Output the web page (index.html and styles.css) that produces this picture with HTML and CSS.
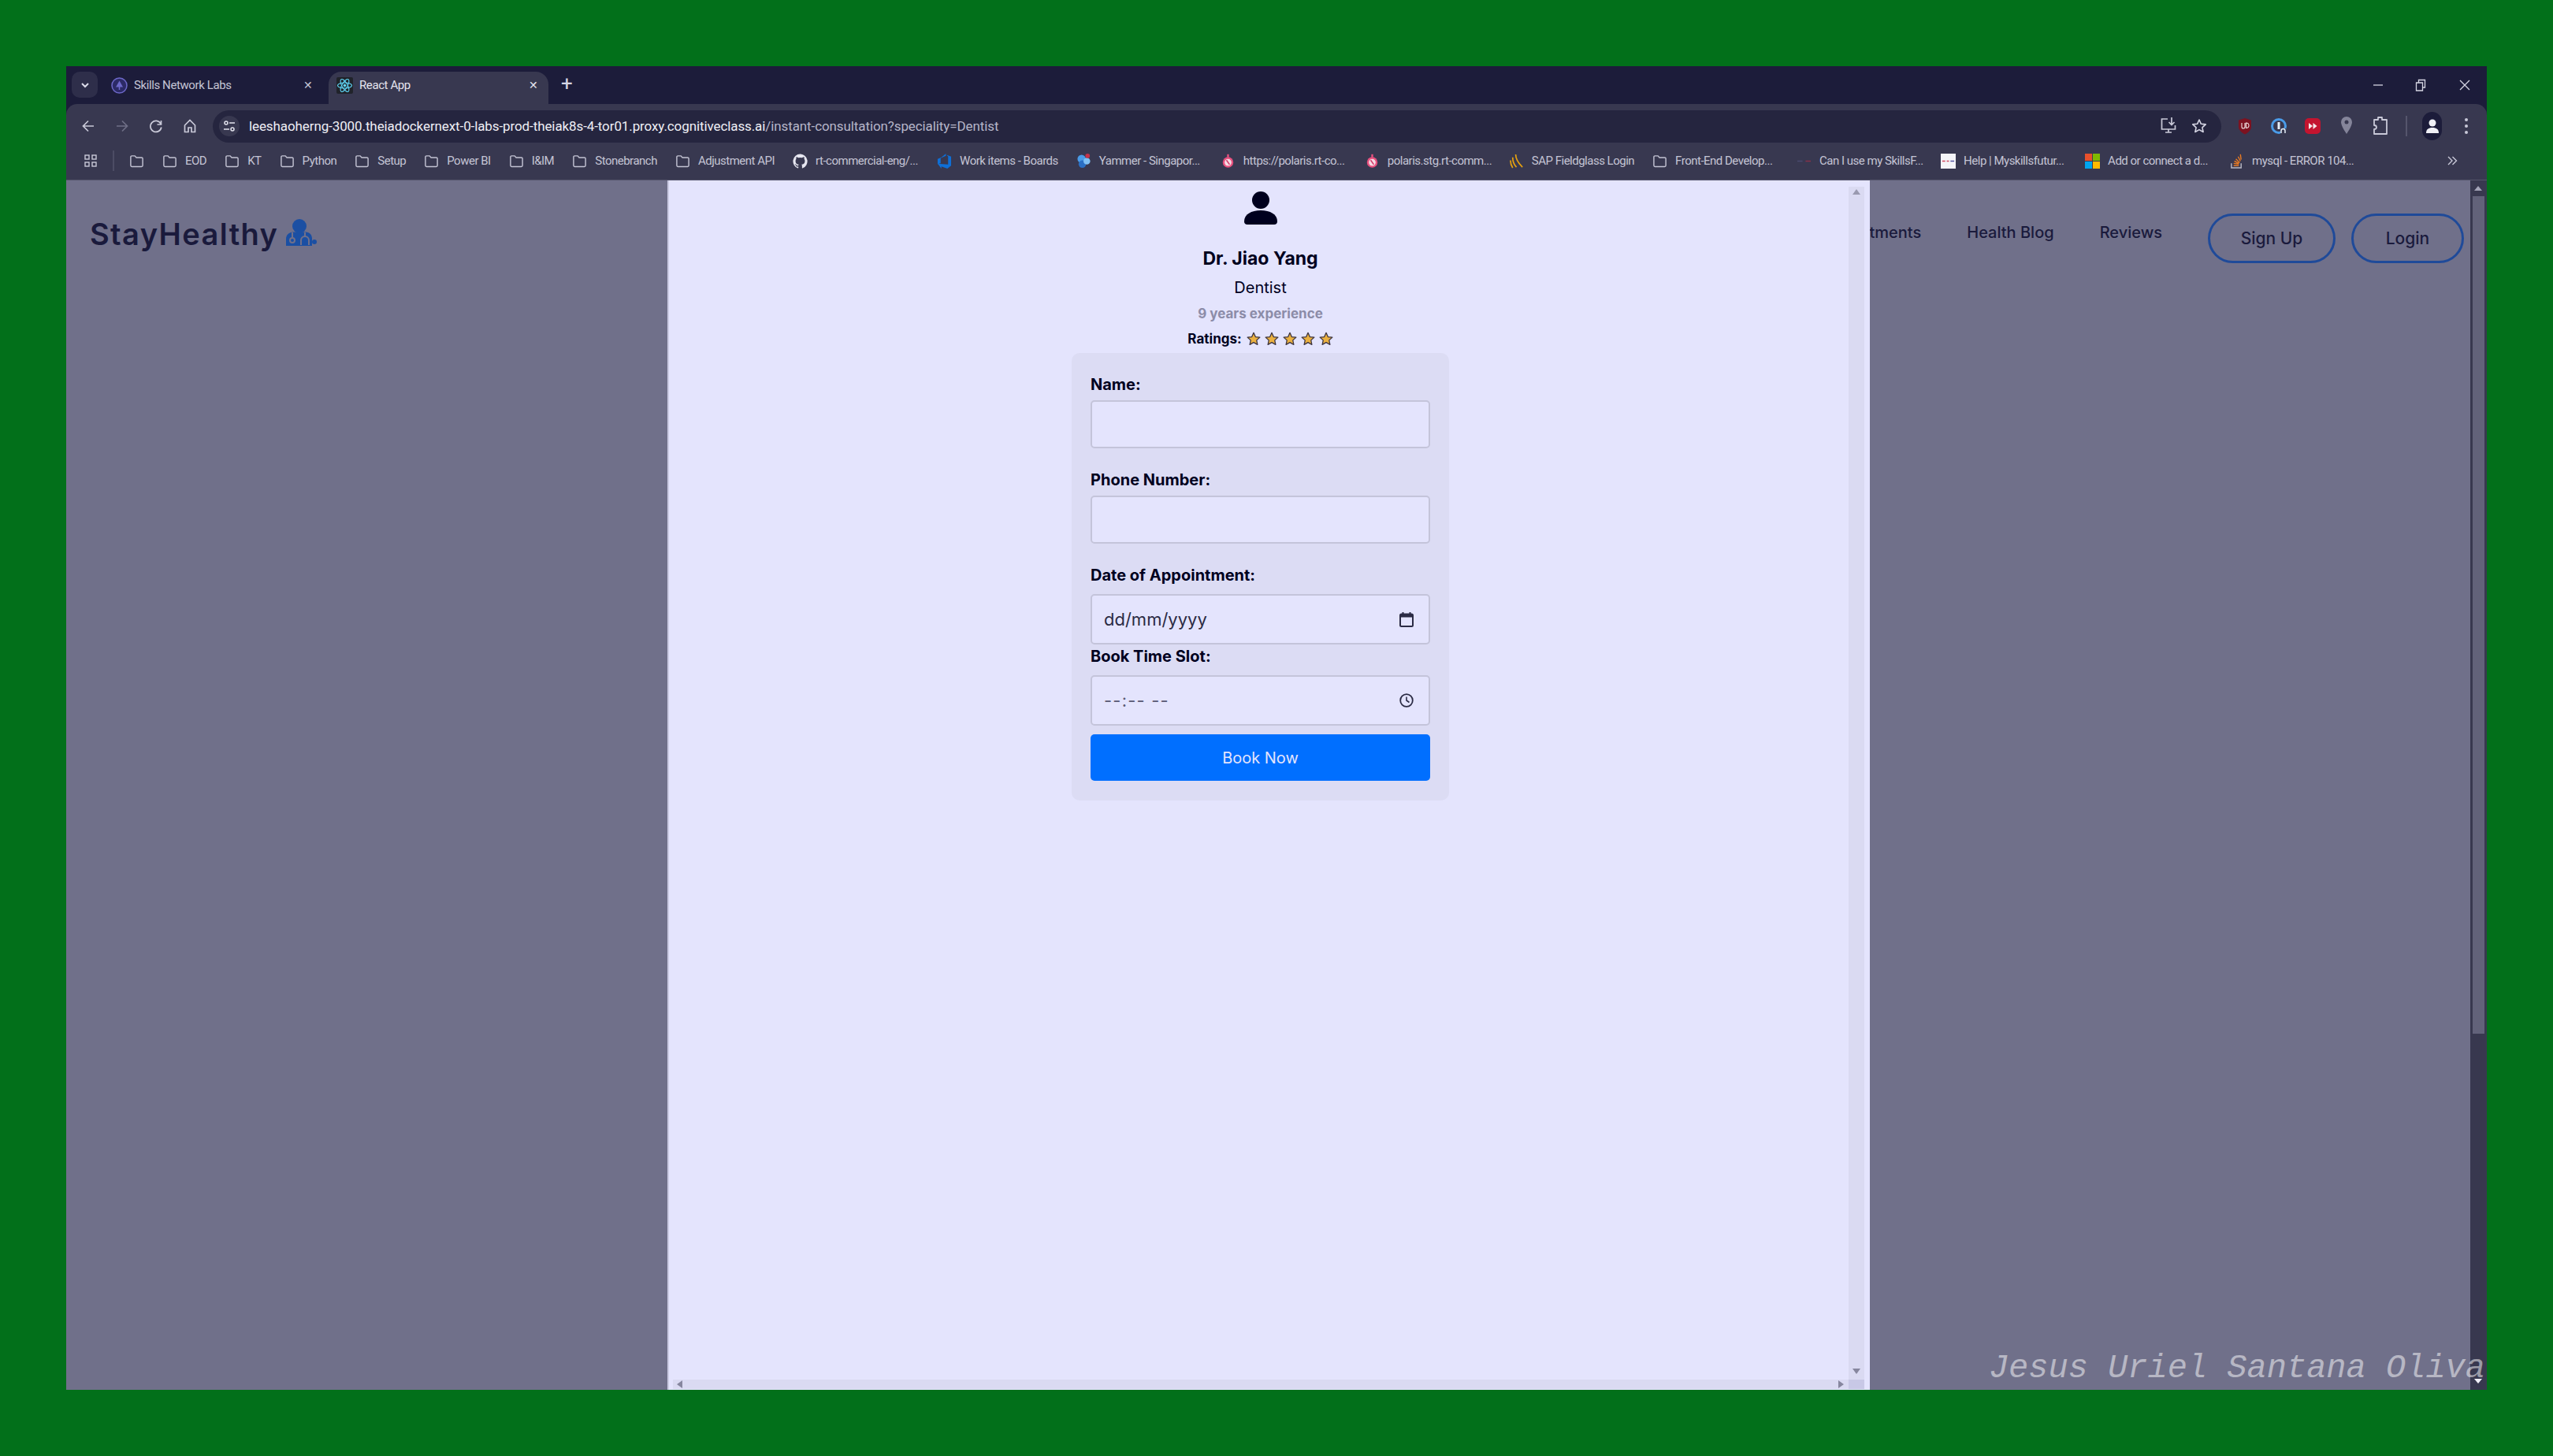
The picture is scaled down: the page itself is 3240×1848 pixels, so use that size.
FILE: index.html

```html
<!DOCTYPE html>
<html lang="en">
<head>
  <meta charset="UTF-8" />
  <title>React App</title>
  <link rel="stylesheet" href="styles.css">
</head>
<body>
  <svg class="defs" width="0" height="0">
    <symbol id="folder" viewBox="0 0 20 20">
      <path d="M2 4.500c0-.8.6-1.500 1.500-1.500h4l2 2.200h7c.8 0 1.500.6 1.500 1.500v9.100c0 .8-.7 1.500-1.500 1.500h-13c-.9 0-1.500-.7-1.500-1.500z" fill="none" stroke="currentColor" stroke-width="1.500"/>
    </symbol>
    <symbol id="star" viewBox="0 0 24 24">
      <path d="M12 1.800l3.100 6.900 7.400.8-5.500 5 1.500 7.400-6.500-3.800-6.500 3.800 1.500-7.400-5.500-5 7.400-.8z" fill="#eab040" stroke="#3b3340" stroke-width="1.700" stroke-linejoin="round"/>
    </symbol>
    <symbol id="polaris" viewBox="0 0 20 24">
      <circle cx="10" cy="14" r="8.500" fill="#e8517f"/>
      <circle cx="10" cy="14" r="5.500" fill="#f6dbe4"/>
      <rect x="8.500" y="1" width="3" height="5" fill="#e8517f"/>
      <path d="M7.500 10.500l5 7" stroke="#d13a68" stroke-width="2"/>
    </symbol>
  </svg>

  <div class="window">
    <div class="tabstrip">
      <button class="tab-list">
        <svg width="14" height="14" viewBox="0 0 14 14"><path d="M3 5l4 4 4-4" fill="none" stroke="#dcdcea" stroke-width="2"/></svg>
      </button>
      <div class="tab">
        <svg class="tab-icon" width="21" height="21" viewBox="0 0 21 21"><circle cx="10.500" cy="10.500" r="9.500" fill="#2c2a66" stroke="#6d68c8" stroke-width="1.500"/><path d="M10.500 4.500l4.500 8h-9z" fill="#6d68c8"/><path d="M10.500 10v6" stroke="#6d68c8" stroke-width="1.500"/></svg>
        <span class="tab-title">Skills Network Labs</span>
        <span class="tab-close">✕</span>
      </div>
      <div class="tab tab-active">
        <svg class="tab-icon" width="21" height="21" viewBox="0 0 21 21"><rect width="21" height="21" rx="2" fill="#20232a"/><g fill="none" stroke="#61dafb" stroke-width="1.100"><ellipse cx="10.500" cy="10.500" rx="9" ry="3.500"/><ellipse cx="10.500" cy="10.500" rx="9" ry="3.500" transform="rotate(60 10.500 10.500)"/><ellipse cx="10.500" cy="10.500" rx="9" ry="3.500" transform="rotate(120 10.500 10.500)"/></g><circle cx="10.500" cy="10.500" r="1.800" fill="#61dafb"/></svg>
        <span class="tab-title">React App</span>
        <span class="tab-close">✕</span>
      </div>
      <span class="tab-new">+</span>
      <div class="win-controls">
        <svg class="win-min" width="14" height="14" viewBox="0 0 14 14"><path d="M1 7h12" stroke="#d6d6e4" stroke-width="1.300"/></svg>
        <svg class="win-restore" width="14" height="16" viewBox="0 0 14 16"><path d="M1.500 5h8v10h-8zM4.500 5V1.500h8V11H9.500" fill="none" stroke="#d6d6e4" stroke-width="1.300"/></svg>
        <svg class="win-close" width="14" height="14" viewBox="0 0 14 14"><path d="M1 1l12 12M13 1L1 13" stroke="#d6d6e4" stroke-width="1.300"/></svg>
      </div>
    </div>

    <div class="toolbar">
      <span class="tool-btn"><svg width="20" height="20" viewBox="0 0 20 20"><path d="M17 10H4M10 3.500L3.500 10l6.500 6.500" fill="none" stroke="#c9c9d8" stroke-width="1.700"/></svg></span>
      <span class="tool-btn"><svg width="20" height="20" viewBox="0 0 20 20"><path d="M3 10h13M10 3.500l6.500 6.500-6.500 6.500" fill="none" stroke="#6f6f86" stroke-width="1.700"/></svg></span>
      <span class="tool-btn"><svg width="20" height="20" viewBox="0 0 20 20"><path d="M16 7a7 7 0 1 0 .8 4.500M16.500 3v5h-5" fill="none" stroke="#c9c9d8" stroke-width="1.700"/></svg></span>
      <span class="tool-btn"><svg width="20" height="20" viewBox="0 0 20 20"><path d="M3.500 9L10 2.500 16.500 9v8.500h-4.500v-5.500h-4v5.500H3.500z" fill="none" stroke="#c9c9d8" stroke-width="1.700"/></svg></span>
      <div class="omnibox">
        <span class="site-info"><svg width="16" height="16" viewBox="0 0 16 16"><g fill="none" stroke="#e4e4ee" stroke-width="1.500"><circle cx="4" cy="4" r="2"/><path d="M8 4h7M1 12h7"/><circle cx="12" cy="12" r="2"/></g></svg></span>
        <span class="url"><span class="url-host">leeshaoherng-3000.theiadockernext-0-labs-prod-theiak8s-4-tor01.proxy.cognitiveclass.ai</span>/instant-consultation?speciality=Dentist</span>
        <svg class="omni-icon" width="22" height="24" viewBox="0 0 22 24"><path d="M10 3H2.500v13h17v-5M7 20h8M11 16v4" fill="none" stroke="#c9c9d8" stroke-width="1.700"/><path d="M15 1v9M11.500 7l3.500 3.500L18.500 7" fill="none" stroke="#c9c9d8" stroke-width="1.700"/></svg>
        <svg class="omni-icon" width="20" height="20" viewBox="0 0 20 20"><path d="M10 2l2.400 5.300 5.800.6-4.300 3.900 1.200 5.700-5.100-2.900-5.100 2.900 1.200-5.700-4.300-3.900 5.800-.6z" fill="none" stroke="#d6d6e4" stroke-width="1.600" stroke-linejoin="round"/></svg>
      </div>
      <span class="tool-btn"><svg width="18" height="22" viewBox="0 0 18 22"><path d="M9 1l8 2.500V12c0 4-4 7.500-8 9.500C5 19.500 1 16 1 12V3.500z" fill="#7d1220"/><path d="M5 7v5a2 2 0 0 0 4 0V7M10.500 7v6.500c2.800 0 3.500-1.500 3.500-3.200s-.7-3.300-3.500-3.300z" fill="none" stroke="#f0e0e0" stroke-width="1.100"/></svg></span>
      <span class="tool-btn"><svg width="20" height="24" viewBox="0 0 20 24"><circle cx="10" cy="12" r="8.500" fill="none" stroke="#4a9be8" stroke-width="3"/><rect x="8.500" y="7" width="3" height="9" fill="#e6eef8"/><rect x="12" y="15" width="7" height="7" fill="#383850"/><path d="M13 21v-3a2.500 2.500 0 0 1 5 0v3" fill="none" stroke="#e6eef8" stroke-width="1.500"/></svg></span>
      <span class="tool-btn"><svg width="20" height="20" viewBox="0 0 20 20"><rect width="20" height="20" y="0" rx="5" fill="#c4142f"/><path d="M5 6l5 4-5 4zM10.500 6l5 4-5 4z" fill="#f6e6e8"/></svg></span>
      <span class="tool-btn"><svg width="18" height="26" viewBox="0 0 18 26"><path d="M9 1a7 7 0 0 0-7 7c0 5 7 15 7 15s7-10 7-15a7 7 0 0 0-7-7z" fill="#85859a"/><circle cx="9" cy="8" r="2.500" fill="#383850"/></svg></span>
      <span class="tool-btn"><svg width="20" height="26" viewBox="0 0 20 26"><path d="M2 5h5V2h5v3h6v18H2v-6c2.500 0 3-1.500 3-2.500S4.500 12 2 12z" fill="none" stroke="#c9c9d8" stroke-width="1.800" stroke-linejoin="round"/></svg></span>
      <span class="tool-sep"></span>
      <span class="tool-btn"><span class="profile"><svg width="18" height="20" viewBox="0 0 18 20"><circle cx="9" cy="6" r="4.500" fill="#f0f0f6"/><path d="M1 19c0-5 3-7 8-7s8 2 8 7z" fill="#f0f0f6"/></svg></span></span>
      <span class="tool-btn"><svg width="6" height="22" viewBox="0 0 6 22"><g fill="#c9c9d8"><circle cx="3" cy="3" r="2"/><circle cx="3" cy="11" r="2"/><circle cx="3" cy="19" r="2"/></g></svg></span>
    </div>

    <div class="bookmarks">
      <svg class="bm-apps" width="16" height="16" viewBox="0 0 16 16"><g fill="none" stroke="#c9c9d8" stroke-width="1.400"><rect x="1" y="1" width="5" height="5"/><rect x="10" y="1" width="5" height="5"/><rect x="1" y="10" width="5" height="5"/><rect x="10" y="10" width="5" height="5"/></g></svg>
      <span class="bm-sep"></span>
      <span class="bm"><svg class="bm-icon"><use href="#folder"/></svg></span>
      <span class="bm"><svg class="bm-icon"><use href="#folder"/></svg>EOD</span>
      <span class="bm"><svg class="bm-icon"><use href="#folder"/></svg>KT</span>
      <span class="bm"><svg class="bm-icon"><use href="#folder"/></svg>Python</span>
      <span class="bm"><svg class="bm-icon"><use href="#folder"/></svg>Setup</span>
      <span class="bm"><svg class="bm-icon"><use href="#folder"/></svg>Power BI</span>
      <span class="bm"><svg class="bm-icon"><use href="#folder"/></svg>I&amp;IM</span>
      <span class="bm"><svg class="bm-icon"><use href="#folder"/></svg>Stonebranch</span>
      <span class="bm"><svg class="bm-icon"><use href="#folder"/></svg>Adjustment API</span>
      <span class="bm"><svg class="bm-icon" viewBox="0 0 20 20"><path d="M10 .5a9.800 9.800 0 0 0-3.100 19c.5.100.7-.2.700-.5v-1.700c-2.700.6-3.300-1.300-3.300-1.300-.5-1.100-1.100-1.400-1.100-1.400-.9-.6.100-.6.100-.6 1 .1 1.500 1 1.500 1 .9 1.500 2.300 1.100 2.800.8.100-.6.300-1.100.6-1.300-2.200-.3-4.400-1.100-4.400-4.800 0-1.100.4-1.900 1-2.600-.1-.2-.4-1.200.1-2.600 0 0 .8-.3 2.700 1a9.300 9.300 0 0 1 4.900 0c1.900-1.300 2.700-1 2.700-1 .5 1.400.2 2.400.1 2.600.6.700 1 1.500 1 2.600 0 3.800-2.300 4.600-4.500 4.800.4.300.7.900.7 1.900V19c0 .3.200.6.700.5A9.800 9.800 0 0 0 10 .5z" fill="#e6e6f0"/></svg><span class="bm-cut">rt-commercial-eng/...</span></span>
      <span class="bm"><svg class="bm-icon" viewBox="0 0 20 20"><path d="M19 4v12l-5 4-8-3v3l-5-6.500 14 1V4l-2-2.500zM6 5l6-5v3L5 6v7l-4 1V7z" fill="#0f6fd6"/></svg>Work items - Boards</span>
      <span class="bm"><svg class="bm-icon" viewBox="0 0 20 20"><circle cx="7" cy="7" r="5.500" fill="#4a9be8"/><circle cx="8" cy="14" r="5" fill="#2a6fc4"/><circle cx="14" cy="10" r="4.500" fill="#7fc0f4"/><circle cx="15" cy="3" r="3" fill="#c4324a"/></svg><span class="bm-cut">Yammer - Singapor...</span></span>
      <span class="bm"><svg class="bm-icon"><use href="#polaris"/></svg><span class="bm-cut">https://polaris.rt-co...</span></span>
      <span class="bm"><svg class="bm-icon"><use href="#polaris"/></svg><span class="bm-cut">polaris.stg.rt-comm...</span></span>
      <span class="bm"><svg class="bm-icon" viewBox="0 0 20 20"><path d="M9 1c0 6 4 12 9 17M5 5c0 5 2 10 5 13M2 9c0 4 1 7 3 10" fill="none" stroke="#e6a10f" stroke-width="1.800"/></svg>SAP Fieldglass Login</span>
      <span class="bm"><svg class="bm-icon"><use href="#folder"/></svg><span class="bm-cut">Front-End Develop...</span></span>
      <span class="bm"><svg class="bm-icon" viewBox="0 0 20 20"><path d="M1 10h7" stroke="#4a4a70" stroke-width="1.500"/><path d="M12 10h7" stroke="#8a3048" stroke-width="1.500"/></svg><span class="bm-cut">Can I use my SkillsF...</span></span>
      <span class="bm"><svg class="bm-icon" viewBox="0 0 20 20"><rect width="20" height="20" fill="#f4f4f8"/><path d="M2 10h4M8 10h3" stroke="#d04a60" stroke-width="1.500"/><path d="M13 10h5" stroke="#5050a0" stroke-width="1.500"/></svg><span class="bm-cut">Help | Myskillsfutur...</span></span>
      <span class="bm"><svg class="bm-icon" viewBox="0 0 20 20"><rect width="9.500" height="9.500" fill="#e8502c"/><rect x="10.500" width="9.500" height="9.500" fill="#7fb800"/><rect y="10.500" width="9.500" height="9.500" fill="#00a4ef"/><rect x="10.500" y="10.500" width="9.500" height="9.500" fill="#ffb900"/></svg><span class="bm-cut">Add or connect a d...</span></span>
      <span class="bm"><svg class="bm-icon" viewBox="0 0 20 20"><path d="M3 13v6h13v-6" fill="none" stroke="#b8b8c4" stroke-width="1.500"/><path d="M6 16h7M6 13l7 1M7 10l6 3M9 7l5 5M12 4l3 6M15 1l1 7" stroke="#e87a23" stroke-width="1.500"/></svg><span class="bm-cut">mysql - ERROR 104...</span></span>
      <svg class="bm-more" width="14" height="14" viewBox="0 0 14 14"><path d="M2 2l5 5-5 5M7.500 2l5 5-5 5" fill="none" stroke="#c9c9d8" stroke-width="1.400"/></svg>
    </div>

    <div class="viewport">
      <div class="page">
        <header class="site-nav">
          <div class="logo">
            <span>StayHealthy</span>
            <svg width="39" height="34" viewBox="0 0 39 34"><circle cx="17" cy="9" r="9" fill="#1b4fa3"/><path d="M0 34v-9c0-5 4-8 9-8.500h16c5 .5 8 3.500 8 8.500v9z" fill="#1b4fa3"/><g fill="none" stroke="#70708a" stroke-width="2"><circle cx="8" cy="27" r="3"/><path d="M8 24v-7M19 33v-6a5 5 0 0 1 10 0v6M24 22v-5"/></g><circle cx="36" cy="29" r="3" fill="#1b4fa3"/></svg>
          </div>
          <div class="nav-right">
            <nav class="nav-links">
              <a>Appointments</a>
              <a>Health Blog</a>
              <a>Reviews</a>
            </nav>
            <a class="nav-btn btn-signup">Sign Up</a>
            <a class="nav-btn btn-login">Login</a>
          </div>
        </header>

        <div class="modal">
          <div class="modal-body">
            <svg class="avatar" width="42" height="42" viewBox="0 0 42 42"><circle cx="21" cy="11" r="11" fill="#00001e"/><path d="M0 38c0-9 9-14 21-14s21 5 21 14c0 2.500-1.500 4-4 4H4c-2.500 0-4-1.500-4-4z" fill="#00001e"/></svg>
            <div class="doc-name">Dr. Jiao Yang</div>
            <div class="doc-spec">Dentist</div>
            <div class="doc-exp">9 years experience</div>
            <div class="doc-rating">
              <span>Ratings:</span>
              <span class="stars">
                <svg class="star"><use href="#star"/></svg>
                <svg class="star"><use href="#star"/></svg>
                <svg class="star"><use href="#star"/></svg>
                <svg class="star"><use href="#star"/></svg>
                <svg class="star"><use href="#star"/></svg>
              </span>
            </div>

            <form class="book-card">
              <label class="lbl">Name:</label>
              <input class="inp" type="text">
              <label class="lbl lbl-next">Phone Number:</label>
              <input class="inp" type="text">
              <label class="lbl lbl-next lbl-date">Date of Appointment:</label>
              <div class="inp inp-picker">
                <span>dd/mm/yyyy</span>
                <svg width="18" height="19" viewBox="0 0 18 19"><path d="M4.500 0v3M13.500 0v3" stroke="#2b2b44" stroke-width="2"/><rect x="1" y="2.500" width="16" height="15.500" rx="1.500" fill="none" stroke="#2b2b44" stroke-width="2"/><rect x="1" y="2.500" width="16" height="4" fill="#2b2b44"/></svg>
              </div>
              <label class="lbl lbl-date">Book Time Slot:</label>
              <div class="inp inp-picker inp-time">
                <span>--:-- --</span>
                <svg width="18" height="18" viewBox="0 0 18 18"><circle cx="9" cy="9" r="7.800" fill="none" stroke="#2b2b44" stroke-width="1.800"/><path d="M9 4.500V9l3.500 2.500" fill="none" stroke="#2b2b44" stroke-width="1.600"/></svg>
              </div>
              <button class="book-btn" type="button">Book Now</button>
            </form>
          </div>
          <div class="vscroll">
            <span class="arrow arrow-up"></span>
            <span class="arrow arrow-down"></span>
          </div>
          <div class="hscroll">
            <span class="arrow arrow-left"></span>
            <span class="arrow arrow-right"></span>
          </div>
          <div class="scroll-corner"></div>
        </div>
      </div>

      <div class="page-scroll">
        <span class="arrow-light arrow-light-up"></span>
        <span class="page-thumb"></span>
        <span class="arrow-light arrow-light-down"></span>
      </div>

      <div class="watermark">Jesus Uriel Santana Oliva</div>
    </div>
  </div>
</body>
</html>
```

FILE: styles.css

```css
* { box-sizing: border-box; }
html, body { margin: 0; height: 100%; overflow: hidden; }
body {
  background: #02701a;
  padding: 84px 84px 0;
  font-family: Roboto, "Liberation Sans", sans-serif;
}
.defs { position: absolute; }
.window {
  width: 3072px;
  height: 1680px;
  display: flex;
  flex-direction: column;
  background: #1c1c3a;
}

/* browser chrome */
.tabstrip {
  height: 48px;
  flex: none;
  display: flex;
  align-items: flex-start;
  padding: 7px 0 0 7px;
  color: #c4c4d4;
  font-size: 15px;
  letter-spacing: -.4px;
}
.tab-list {
  width: 33px;
  height: 33px;
  padding: 0;
  border: none;
  border-radius: 10px;
  background: #2e2e4a;
  display: flex;
  align-items: center;
  justify-content: center;
}
.tab {
  width: 293px;
  height: 41px;
  padding: 0 14px 7px 17px;
  border-radius: 16px 16px 0 0;
  display: flex;
  align-items: center;
}
.tab-active {
  width: 279px;
  background: #383850;
  color: #e4e4ee;
  padding-left: 10px;
  padding-right: 7px;
}
.tab-icon { flex: none; margin-right: 8px; }
.tab-title { flex: 1; }
.tab-close { font-size: 14px; width: 24px; text-align: center; }
.tab-new { margin: 0 0 0 16px; font-size: 26px; line-height: 30px; color: #d6d6e4; }
.win-controls {
  margin-left: auto;
  display: flex;
  align-items: center;
  height: 34px;
  padding-right: 21px;
}
.win-min { margin-right: 40px; }
.win-restore { margin-right: 42px; }

.toolbar {
  height: 56px;
  flex: none;
  display: flex;
  align-items: center;
  padding: 0 5px 0 6px;
  background: #383850;
  border-radius: 14px 14px 0 0;
}
.tool-btn {
  width: 43px;
  height: 40px;
  flex: none;
  display: flex;
  align-items: center;
  justify-content: center;
}
.omnibox {
  flex: 1;
  height: 41px;
  margin: 0 8px;
  padding: 0 18px 0 8px;
  display: flex;
  align-items: center;
  background: #25253f;
  border-radius: 21px;
}
.site-info {
  width: 26px;
  height: 26px;
  margin-right: 12px;
  border-radius: 50%;
  background: #383850;
  display: flex;
  align-items: center;
  justify-content: center;
}
.url { flex: 1; font-size: 17px; color: #b5b5c8; letter-spacing: -.1px; }
.url-host { color: #eeeef4; }
.omni-icon { margin-left: 18px; }
.tool-sep { width: 2px; height: 26px; margin: 0 10px 0 11px; background: #55556c; }
.profile {
  width: 25px;
  height: 36px;
  border-radius: 13px;
  background: #1c1c3a;
  display: flex;
  align-items: center;
  justify-content: center;
}

.bookmarks {
  height: 41px;
  flex: none;
  display: flex;
  align-items: center;
  padding: 0 0 8px 23px;
  background: #383850;
  border-bottom: 1px solid #55556c;
  color: #c4c4d4;
  font-size: 15px;
  letter-spacing: -.5px;
  white-space: nowrap;
}
.bm-sep { width: 2px; height: 26px; margin: 0 19px; background: #4c4c64; }
.bm-apps { margin-right: 1px; }
.bm { display: flex; align-items: center; gap: 10px; margin-right: 23px; }
.bm-icon { width: 19px; height: 19px; flex: none; color: #c4c4d4; }
.bm-cut { width: 131px; }
.bm-more { margin-left: auto; margin-right: 37px; }

/* page behind the dialog */
.viewport { flex: 1; display: flex; min-height: 0; position: relative; }
.page {
  flex: 1;
  position: relative;
  background: #70708a;
  color: #1a1a3c;
  font-family: Inter, "Noto Sans", sans-serif;
  overflow: hidden;
}
.site-nav {
  height: 136px;
  display: flex;
  align-items: center;
  justify-content: space-between;
  padding: 0 8px 0 30px;
}
.logo {
  display: flex;
  align-items: center;
  gap: 10px;
  font-size: 38px;
  font-weight: 600;
  letter-spacing: 1.400px;
}
.logo svg { margin-top: -4px; }
.nav-right { display: flex; align-items: center; }
.nav-links {
  display: flex;
  gap: 58px;
  margin: 0 58px 5px 0;
  font-size: 20px;
  font-weight: 500;
}
.nav-btn {
  height: 63px;
  margin-top: 10px;
  display: flex;
  align-items: center;
  justify-content: center;
  border: 3px solid #1f4a99;
  border-radius: 32px;
  font-size: 21px;
  font-weight: 500;
}
.btn-signup { width: 162px; margin-right: 20px; }
.btn-login { width: 143px; }

/* dialog */
.modal {
  position: absolute;
  left: 763px;
  top: 0;
  bottom: 0;
  width: 1526px;
  display: grid;
  grid-template-columns: 1fr 20px;
  grid-template-rows: 1fr 12px;
  padding: 8px 7px 1px 0;
  background: #e4e4fd;
  border-left: 2px solid #cacae2;
  color: #00001e;
}
.modal-body {
  padding-left: 4px;
  display: flex;
  flex-direction: column;
  align-items: center;
}
.avatar { margin-top: 6px; }
.doc-name { margin-top: 28px; font-size: 23px; line-height: 30px; font-weight: 700; }
.doc-spec { margin-top: 8px; font-size: 20px; line-height: 28px; }
.doc-exp { margin-top: 7px; font-size: 17px; line-height: 24px; font-weight: 700; color: #8c8ca8; }
.doc-rating {
  margin-top: 8px;
  display: flex;
  align-items: center;
  gap: 6px;
  font-size: 17px;
  line-height: 24px;
  font-weight: 700;
}
.stars { display: flex; gap: 5px; }
.star { width: 18px; height: 18px; }

.book-card {
  width: 479px;
  margin-top: 6px;
  padding: 25px 24px 25px;
  background: #dcdcf4;
  border-radius: 10px;
}
.lbl { display: block; height: 30px; line-height: 30px; font-size: 20px; font-weight: 700; margin-bottom: 5px; }
.lbl-next { margin-top: 25px; }
.lbl-date { margin-bottom: 9px; }
.inp {
  display: block;
  width: 100%;
  height: 61px;
  background: #e4e4fd;
  border: 2px solid #c4c4da;
  border-radius: 5px;
}
.inp-picker {
  height: 64px;
  padding: 0 19px 0 15px;
  display: flex;
  align-items: center;
  justify-content: space-between;
  font-size: 22px;
  color: #2b2b44;
}
.inp-time { color: #5a5a74; letter-spacing: 1.200px; }
.book-btn {
  display: block;
  width: 100%;
  height: 59px;
  margin-top: 11px;
  border: none;
  border-radius: 5px;
  background: #006fff;
  color: #e4e4fd;
  font-family: Inter, "Noto Sans", sans-serif;
  font-size: 20px;
}

/* scrollbars */
.vscroll, .hscroll, .scroll-corner { background: #dadaf2; position: relative; }
.hscroll { margin-left: 5px; }
.scroll-corner { background: #c8c8e6; }
.arrow { position: absolute; width: 0; height: 0; border: 5px solid transparent; }
.arrow-up { left: 5px; top: 3px; border-bottom: 7px solid #9a9ab0; border-top: none; }
.arrow-down { left: 5px; bottom: 7px; border-top: 7px solid #86869e; border-bottom: none; }
.arrow-left { left: 5px; top: 1px; border-right: 7px solid #86869e; border-left: none; }
.arrow-right { right: 6px; top: 1px; border-left: 7px solid #86869e; border-right: none; }

.page-scroll { width: 21px; position: relative; background: #38384f; }
.arrow-light { position: absolute; left: 5px; width: 0; height: 0; border: 5px solid transparent; }
.arrow-light-up { top: 7px; border-bottom: 6px solid #a4a4b8; border-top: none; }
.arrow-light-down { bottom: 8px; border-top: 6px solid #f0f0f8; border-bottom: none; }
.page-thumb { position: absolute; left: 3px; right: 3px; top: 20px; height: 1063px; background: #62627a; }

.watermark {
  position: absolute;
  right: 2px;
  bottom: 3px;
  font-family: "Liberation Mono", monospace;
  font-style: italic;
  font-size: 42px;
  line-height: 48px;
  color: rgba(255, 255, 255, .5);
  white-space: nowrap;
}
```
